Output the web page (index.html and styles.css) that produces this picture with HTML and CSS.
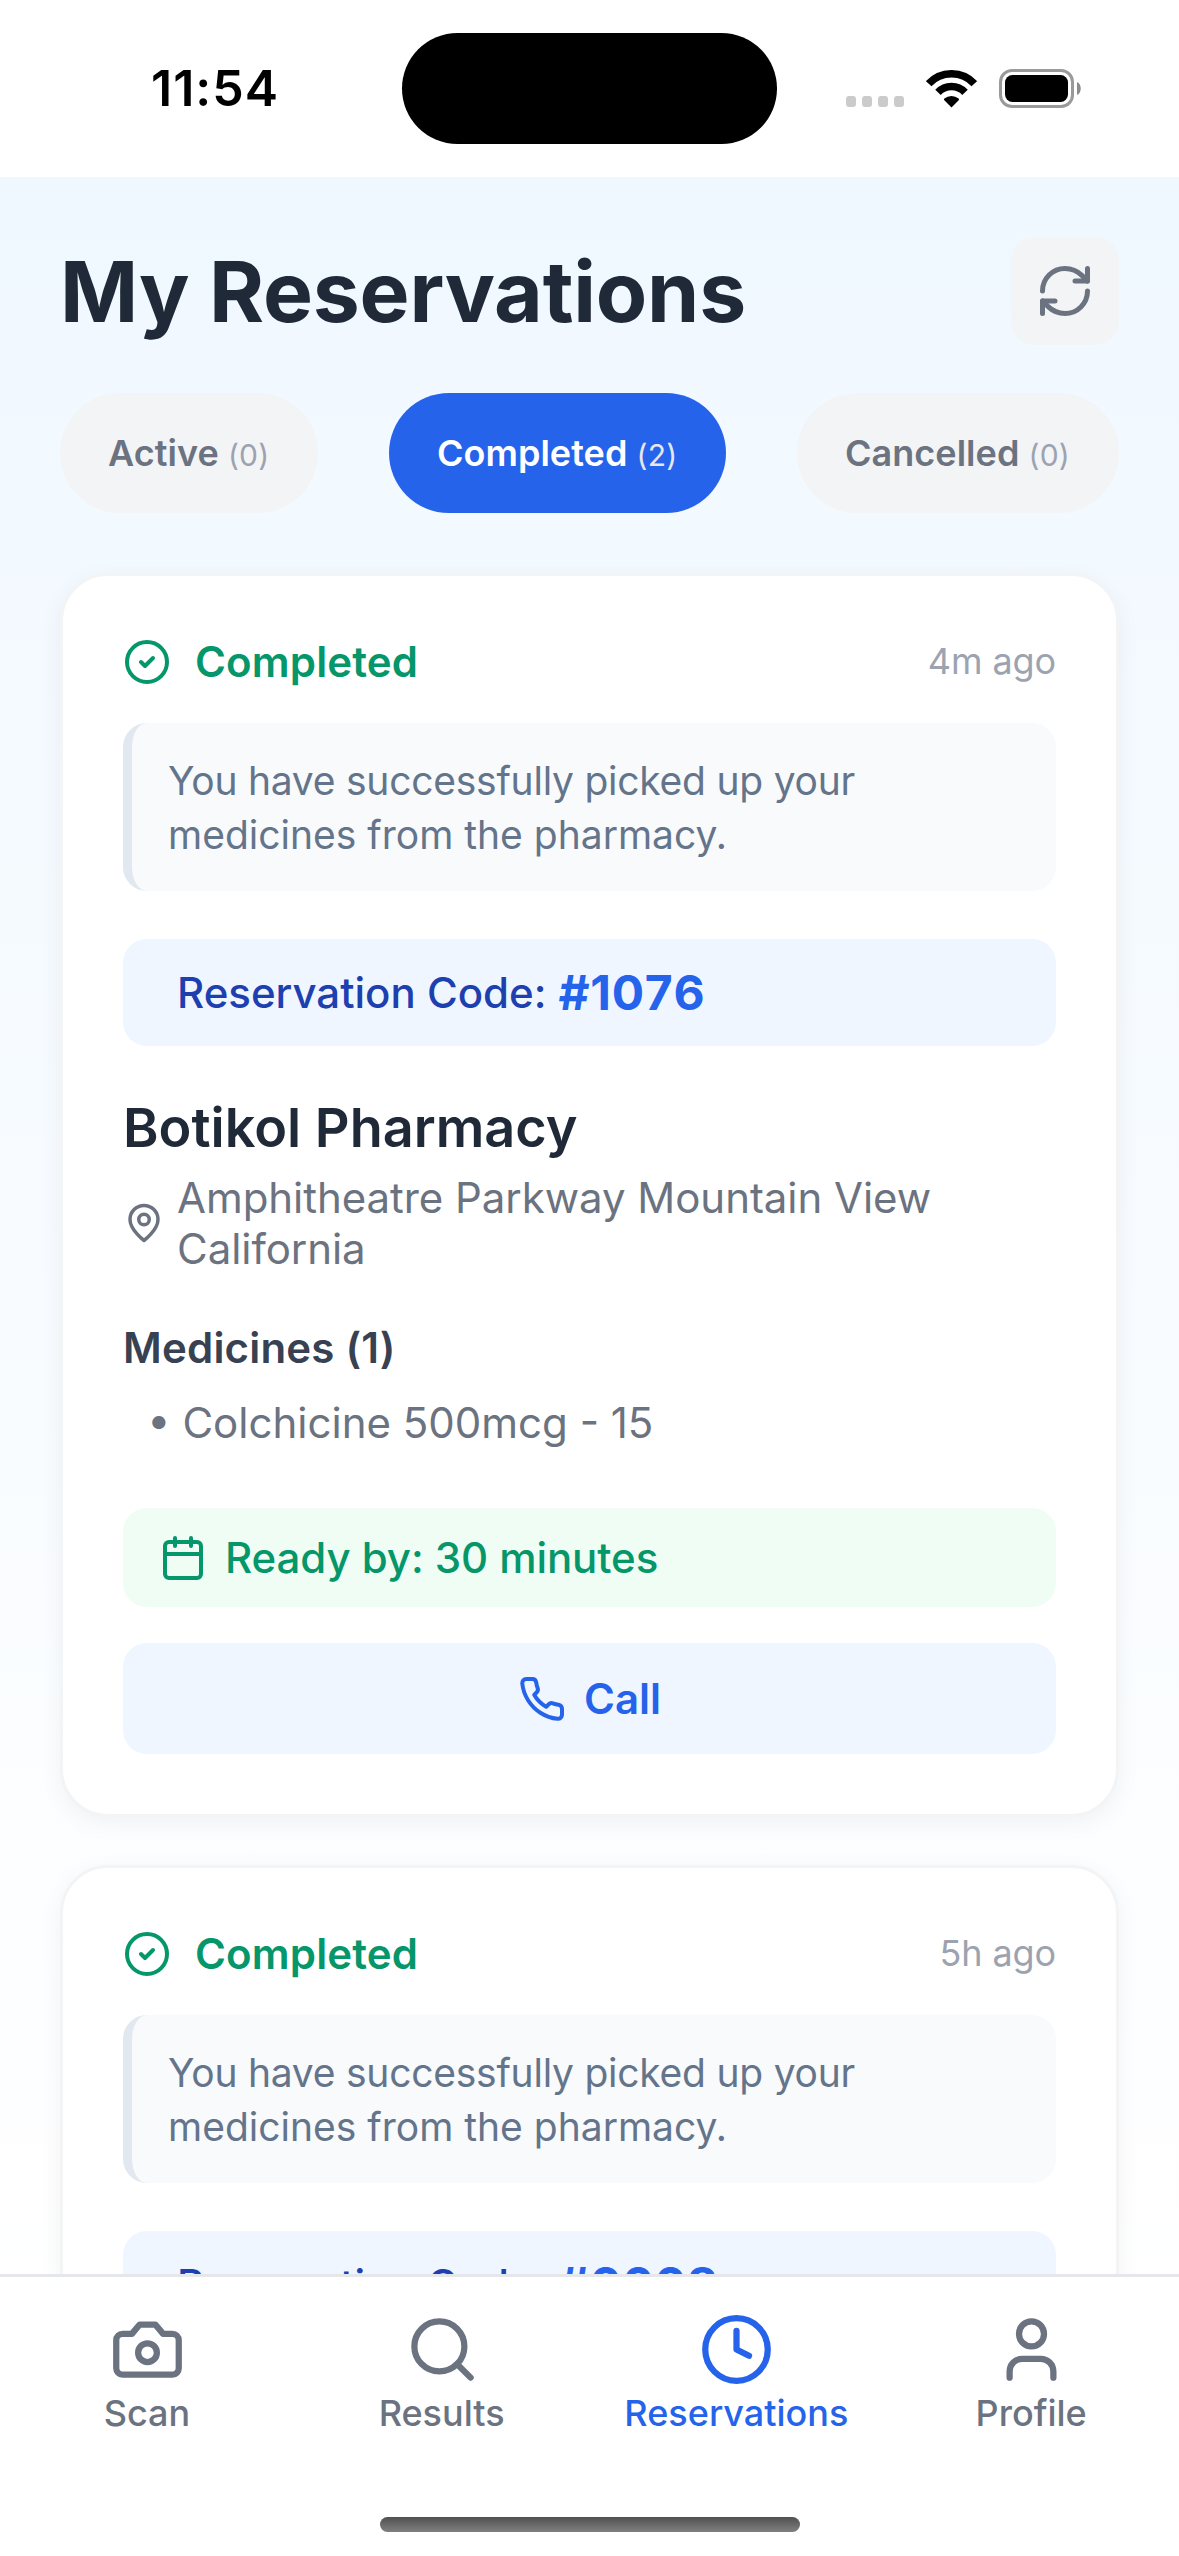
FILE: index.html
```html
<!DOCTYPE html>
<html lang="en">
<head>
<meta charset="utf-8">
<title>My Reservations</title>
<link rel="stylesheet" href="styles.css">
</head>
<body>
<svg class="sprite" aria-hidden="true">
  <symbol id="i-check" viewBox="0 0 24 24"><circle cx="12" cy="12" r="10"/><path d="m9 12 2 2 4-4"/></symbol>
</svg>
<div class="screen">
  <header class="status-bar">
    <div class="time">11:54</div>
    <div class="island"></div>
    <div class="indicators">
      <div class="dots"><i></i><i></i><i></i><i></i></div>
      <svg class="wifi" viewBox="0 0 51 38"><g fill="none" stroke="#000" stroke-width="7.600"><path d="M2.700 13.700a31.200 31.200 0 0 1 45.600 0"/><path d="M12 22.400a18.500 18.500 0 0 1 27 0"/></g><path d="M25.500 37.500l-7.200-7.200c-.5-.6-.5-1.300.1-1.800a11 11 0 0 1 14.200 0c.6.5.6 1.200.1 1.800z"/></svg>
      <svg class="battery" viewBox="0 0 83 39"><rect x="1.500" y="1.500" width="72" height="36" rx="11.500" fill="none" stroke="#9a9a9a" stroke-width="3"/><rect x="6" y="6" width="63" height="27" rx="7.500"/><path d="M78 13c5 2 5 11 0 13z" fill="#8c8c8c"/></svg>
    </div>
  </header>

  <main class="content">
    <div class="title-row">
      <h1>My Reservations</h1>
      <button class="refresh" aria-label="Refresh">
        <svg class="icon s60" viewBox="0 0 24 24"><path d="M3 12a9 9 0 0 1 9-9 9.750 9.750 0 0 1 6.740 2.740L21 8"/><path d="M21 3v5h-5"/><path d="M21 12a9 9 0 0 1-9 9 9.750 9.750 0 0 1-6.740-2.740L3 16"/><path d="M8 16H3v5"/></svg>
      </button>
    </div>
    <nav class="tabs">
      <div class="tab">Active <span>(0)</span></div>
      <div class="tab active">Completed <span>(2)</span></div>
      <div class="tab">Cancelled <span>(0)</span></div>
    </nav>

    <div class="list">
      <article class="card">
        <div class="card-head">
          <div class="status"><svg class="icon s48"><use href="#i-check"/></svg>Completed</div>
          <div class="ago">4m ago</div>
        </div>
        <p class="note">You have successfully picked up your medicines from the pharmacy.</p>
        <div class="code"><span>Reservation Code:</span><strong class="spaced">#1076</strong></div>
        <h2>Botikol Pharmacy</h2>
        <div class="address">
          <svg class="icon s42" viewBox="0 0 24 24"><path d="M20 10c0 6-8 12-8 12s-8-6-8-12a8 8 0 0 1 16 0Z"/><circle cx="12" cy="10" r="3"/></svg>
          <span>Amphitheatre Parkway Mountain View California</span>
        </div>
        <h3>Medicines (1)</h3>
        <div class="medicine">• Colchicine 500mcg - 15</div>
        <div class="ready">
          <svg class="icon s48" viewBox="0 0 24 24"><path d="M8 2v4M16 2v4M3 10h18"/><rect x="3" y="4" width="18" height="18" rx="2"/></svg>
          <span>Ready by: 30 minutes</span>
        </div>
        <div class="call">
          <svg class="icon s48" viewBox="0 0 24 24"><path d="M22 16.920v3a2 2 0 0 1-2.180 2 19.790 19.790 0 0 1-8.630-3.070 19.500 19.500 0 0 1-6-6 19.790 19.790 0 0 1-3.070-8.670A2 2 0 0 1 4.110 2h3a2 2 0 0 1 2 1.720 12.840 12.840 0 0 0 .7 2.810 2 2 0 0 1-.45 2.110L8.090 9.910a16 16 0 0 0 6 6l1.270-1.270a2 2 0 0 1 2.110-.45 12.840 12.840 0 0 0 2.810.7A2 2 0 0 1 22 16.920z"/></svg>
          <span>Call</span>
        </div>
      </article>

      <article class="card">
        <div class="card-head">
          <div class="status"><svg class="icon s48"><use href="#i-check"/></svg>Completed</div>
          <div class="ago">5h ago</div>
        </div>
        <p class="note">You have successfully picked up your medicines from the pharmacy.</p>
        <div class="code"><span>Reservation Code:</span><strong>#0008</strong></div>
      </article>
    </div>
  </main>

  <footer class="tab-bar">
    <div class="items">
      <div class="item"><svg class="icon s75" viewBox="0 0 24 24"><path d="M14.500 4h-5L7 7H4a2 2 0 0 0-2 2v9a2 2 0 0 0 2 2h16a2 2 0 0 0 2-2V9a2 2 0 0 0-2-2h-3l-2.500-3z"/><circle cx="12" cy="13" r="3"/></svg><span>Scan</span></div>
      <div class="item"><svg class="icon s75" viewBox="0 0 24 24"><circle cx="11" cy="11" r="8"/><path d="m21 21-4.300-4.300"/></svg><span>Results</span></div>
      <div class="item current"><svg class="icon s75" viewBox="0 0 24 24"><circle cx="12" cy="12" r="10"/><path d="M12 6v6l4 2"/></svg><span>Reservations</span></div>
      <div class="item"><svg class="icon s75" viewBox="0 0 24 24"><path d="M19 21v-2a4 4 0 0 0-4-4H9a4 4 0 0 0-4 4v2"/><circle cx="12" cy="7" r="4"/></svg><span>Profile</span></div>
    </div>
    <div class="home-indicator"></div>
  </footer>
</div>
</body>
</html>
```
FILE: styles.css
```css
* { box-sizing: border-box; margin: 0; padding: 0; }
body { font-family: Inter, "Liberation Sans", sans-serif; background: #fff; }
.sprite { display: none; }
.screen { width: 1179px; height: 2556px; display: flex; flex-direction: column; overflow: hidden; }

.icon { flex: none; fill: none; stroke: currentColor; stroke-width: 2; stroke-linecap: round; stroke-linejoin: round; display: block; }
.s42 { width: 42px; height: 42px; }
.s48 { width: 48px; height: 48px; }
.s60 { width: 60px; height: 60px; }
.s75 { width: 75px; height: 75px; }

.status-bar { flex: none; height: 177px; display: grid; grid-template-columns: 402px 375px 1fr; align-items: center; }
.time { padding: 0 0 2px 28px; text-align: center; font-size: 50px; font-weight: 600; line-height: 60px; letter-spacing: 1px; }
.island { height: 111px; border-radius: 56px; background: #000; }
.indicators { display: flex; align-items: center; padding-left: 69px; }
.dots { display: flex; gap: 6px; padding-top: 26px; margin-right: 22px; }
.dots i { width: 10px; height: 11px; border-radius: 3px; background: #cbcbcb; }
.wifi { width: 51px; height: 38px; margin-right: 22px; }
.battery { width: 83px; height: 39px; }

.content { flex: 1; min-height: 0; overflow: hidden; padding: 60px 60px 0; background: linear-gradient(#f0f8ff, #fff); }
.title-row { display: flex; justify-content: space-between; align-items: center; height: 108px; }
h1 { font-size: 84px; font-weight: 700; line-height: 102px; letter-spacing: -.2px; color: #1f2937; padding-top: 1px; }
.refresh { width: 108px; height: 108px; border: 0; border-radius: 24px; background: #f3f4f6; color: #6b7280; display: grid; place-items: center; }
.tabs { display: flex; justify-content: space-between; margin-top: 48px; }
.tab { height: 120px; border-radius: 60px; padding: 0 49px 0 48px; background: #f3f4f6; color: #6b7280; font-size: 36px; font-weight: 600; line-height: 120px; letter-spacing: .05px; white-space: nowrap; }
.tab span { font-size: 30px; font-weight: 400; color: #9ca3af; letter-spacing: .2px; }
.tab.active { background: #2563eb; color: #fff; }
.tab.active span { color: #e5e7eb; }

.list { display: flex; flex-direction: column; gap: 48px; padding-top: 60px; }
.card { background: #fff; border: 3px solid #f3f4f6; border-radius: 48px; padding: 60px; box-shadow: 0 6px 24px rgba(0, 0, 0, .05); }
.card-head { display: flex; justify-content: space-between; align-items: center; height: 51px; }
.status { display: flex; align-items: center; gap: 24px; color: #059669; font-size: 42px; font-weight: 600; line-height: 51px; letter-spacing: .15px; }
.ago { padding: 0 0 2px; font-size: 36px; line-height: 44px; color: #9ca3af; letter-spacing: -.1px; }
.note { margin-top: 36px; padding: 31px 36px 29px; border-left: 9px solid #e2e8f0; border-radius: 24px; background: #f8fafc; color: #64748b; font-size: 39px; line-height: 54px; }
.note::first-line { letter-spacing: -.24px; }
.code { display: flex; align-items: center; gap: 12px; margin-top: 48px; height: 107px; padding: 0 54px; border-radius: 24px; background: #eff6ff; color: #1e40af; font-size: 42px; font-weight: 500; }
.code strong { font-size: 48px; font-weight: 700; color: #2563eb; font-kerning: none; }
.code .spaced { letter-spacing: .7px; }
h2 { margin-top: 49px; font-size: 54px; font-weight: 600; line-height: 65px; color: #1f2937; }
.address { display: flex; align-items: center; gap: 12px; margin-top: 12px; color: #6b7280; font-size: 42px; line-height: 51px; letter-spacing: -.05px; }
h3 { margin-top: 48px; font-size: 42px; font-weight: 600; line-height: 51px; color: #374151; letter-spacing: .2px; }
.medicine { margin-top: 24px; padding-left: 24px; color: #6b7280; font-size: 42px; line-height: 51px; }
.ready { display: flex; align-items: center; gap: 18px; margin-top: 60px; height: 99px; padding: 0 36px; border-radius: 24px; background: #f0fdf4; color: #059669; font-size: 42px; font-weight: 500; letter-spacing: -.07px; }
.call { display: flex; align-items: center; justify-content: center; gap: 18px; margin-top: 36px; height: 111px; border-radius: 24px; background: #eff6ff; color: #2563eb; font-size: 42px; font-weight: 600; }

.tab-bar { flex: none; height: 282px; border-top: 3px solid #e5e7eb; background: #fff; display: flex; flex-direction: column; align-items: center; }
.items { display: grid; grid-template-columns: repeat(4, 1fr); width: 100%; padding-top: 35px; }
.item { display: flex; flex-direction: column; align-items: center; gap: 4px; color: #6b7280; font-size: 36px; font-weight: 500; line-height: 44px; }
.item span { padding-right: 1px; }
.item.current { color: #2563eb; }
.home-indicator { width: 420px; height: 15px; margin-top: 82px; border-radius: 8px; background: linear-gradient(#505050, #808080); }
```
